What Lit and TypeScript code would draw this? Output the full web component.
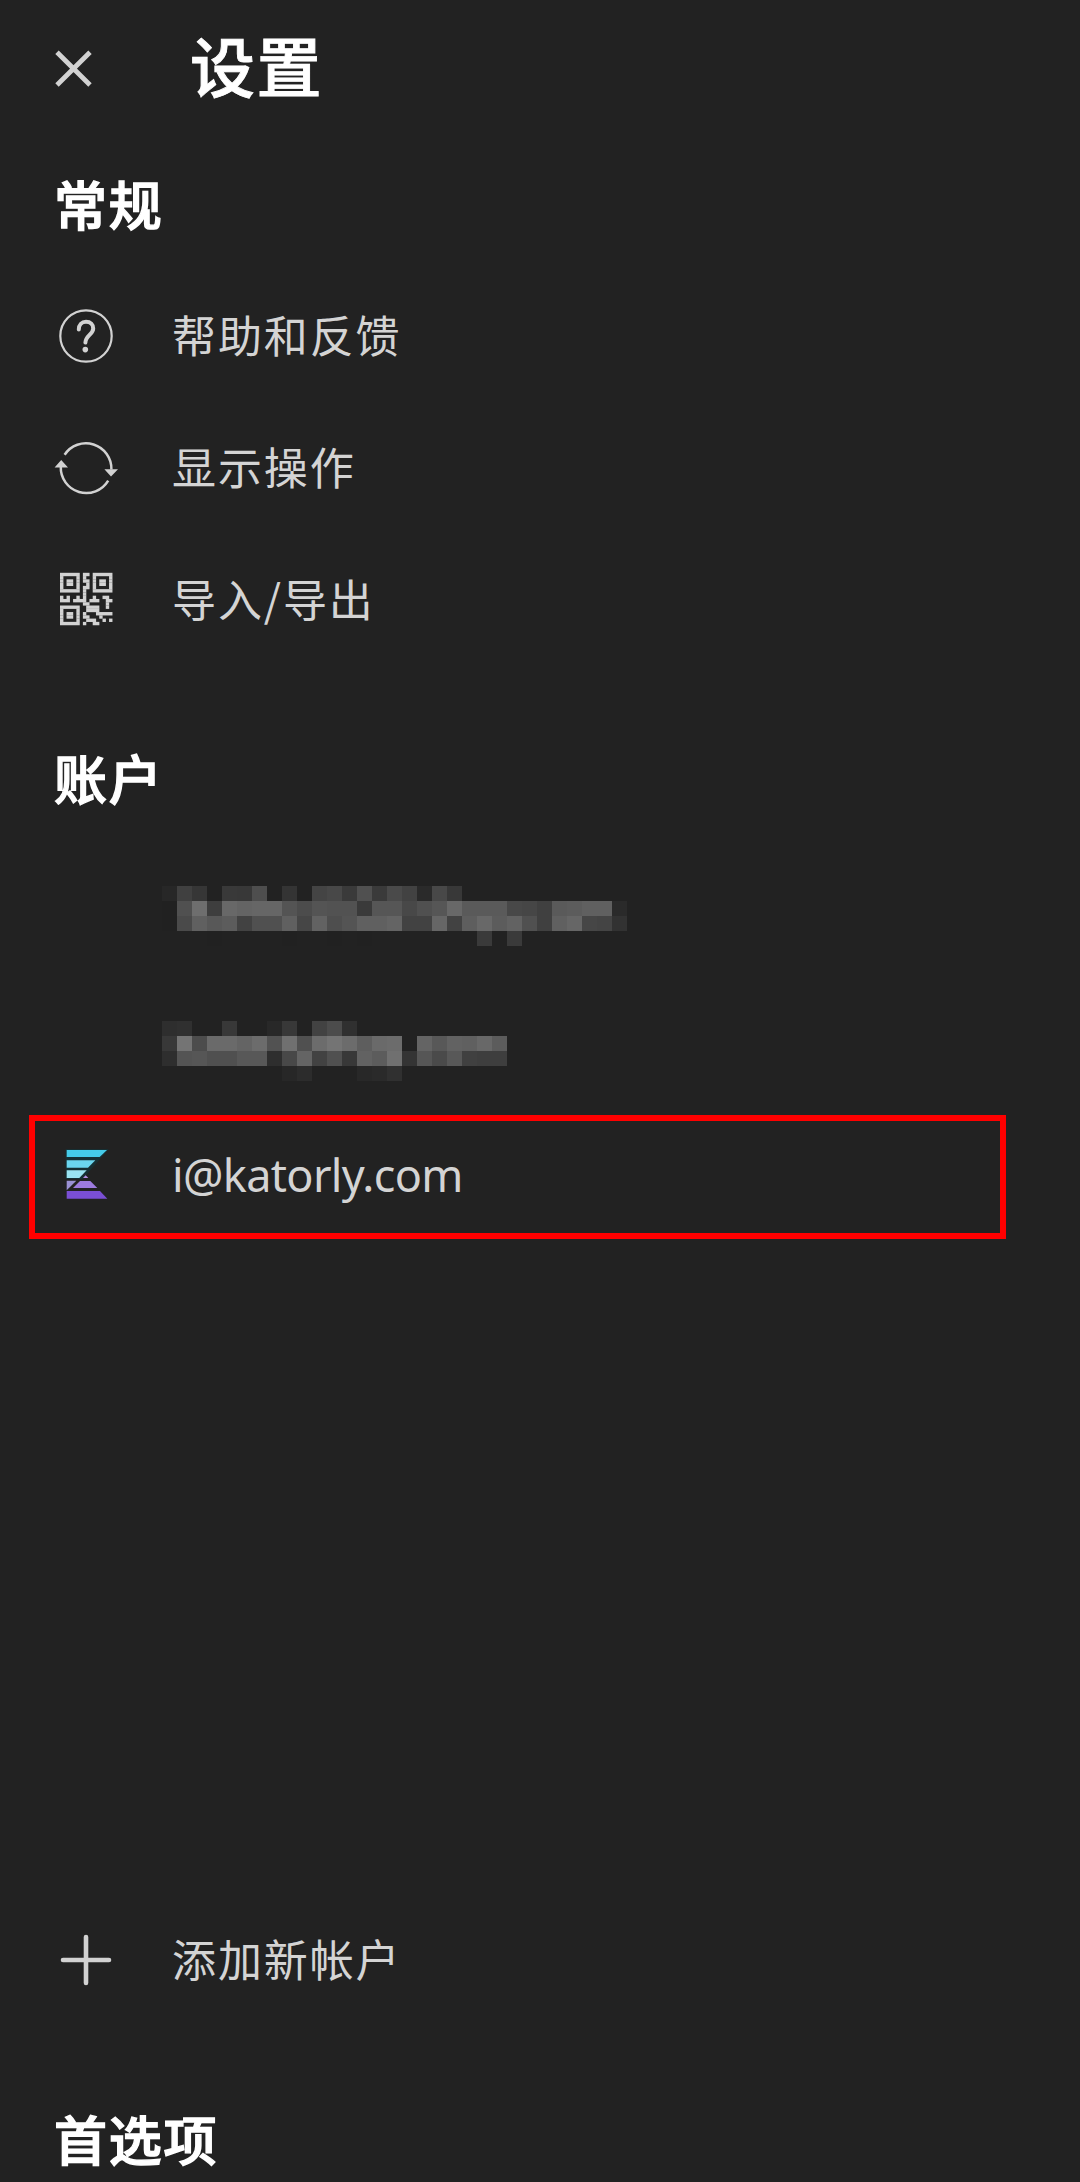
import { LitElement, html, svg, css } from "lit";
import { customElement, property } from "lit/decorators.js";

const QR = [
  "111111.11.111111",
  "1....1.1..1....1",
  "1.11.1.11.1.11.1",
  "1.11.1..1.1.11.1",
  "1....1.11.1....1",
  "111111.1..111111",
  ".......1........",
  "1.1..1.1..1..11.",
  "111.1111.111..11",
  ".......11.....1.",
  "111111..1111..1.",
  "1....1..1111....",
  "1.11.1.1...11111",
  "1.11.1.11...1...",
  "1....1..111..1.1",
  "111111.1..11....",
];

const MASK_A = [
  "27 40 36 22 39 38 4e 22 34 22 44 48 3a 50 3a 4a 42 2a 48 38",
  "21 50 6e 3e 68 64 66 66 54 4c 54 52 52 3a 56 56 48 50 56 68 5a 5a 5a 48 46 40 5a 5c 60 60 2a",
  "21 4a 60 58 5c 42 50 50 60 46 62 4e 54 60 60 64 42 42 66 42 5e 68 5c 62 50 40 60 66 46 44 32",
  "22 22 22 21 22 22 22 22 21 22 22 21 22 21 22 22 22 22 22 22 22 3a 22 3a",
];

const MASK_B = [
  "2e 30 22 22 38 22 22 28 38 22 42 4c 30",
  "38 74 4c 6a 6a 64 6c 52 70 50 6c 74 6c 5e 6a 6c 22 64 58 62 60 68 5c",
  "2e 54 56 50 50 58 58 2e 48 64 42 50 38 62 5c 70 34 56 4a 58 40 3e 3e",
  "22 22 22 22 22 22 22 22 27 2c 22 22 22 28 2a 30",
];

const icons: Record<string, unknown> = {
  help: svg`<g fill="none" stroke="#d2d2d2" stroke-linecap="round">
      <circle cx="32" cy="32" r="25.7" stroke-width="2.2"/>
      <path stroke-width="4" d="M24.8 25.6C24.8 20.6 27.8 17.8 32 17.8C36.6 17.8 39.2 20.6 39.2 24.4C39.2 30.4 31.6 31.6 31.4 38.6"/>
    </g><circle cx="31.3" cy="45.6" r="2.8" fill="#d2d2d2"/>`,
  sync: svg`<g fill="none" stroke="#d2d2d2" stroke-width="2.5">
      <path d="M10.6 18.8A25.5 25.5 0 0 1 57.4 33.5"/>
      <path d="M54.2 44.6A25.5 25.5 0 0 1 6.8 30.5"/>
    </g><path fill="#d2d2d2" d="M0.6 31.4L7.2 24L14 31.4ZM50.4 33.2L57 40.4L64 33.2Z"/>`,
  qr: svg`<g fill="#d2d2d2" transform="translate(6 4.8) scale(3.27)">
      ${QR.flatMap((line, y) => [...line.matchAll(/1+/g)].map((m) =>
        svg`<rect x=${m.index} y=${y} width=${m[0].length + 0.04} height="1.04"/>`))}
    </g>`,
  plus: svg`<path fill="none" stroke="#d2d2d2" stroke-width="4.6" stroke-linecap="round" d="M32 9V55M9 32H55"/>`,
  brand: svg`<g transform="translate(-4 -14) scale(.33333)">
      <path fill="#0d3a42" d="M47 57H176L98 147H47Z" opacity=".55"/>
      <path fill="#45cbe9" d="M50 60H171L149 81H50Z"/>
      <path fill="#6bd6ef" d="M50 91H136L114 113H50Z"/>
      <path fill="#9ae4f2" d="M50 121H110L88 144H50Z"/>
      <path fill="#9a91d4" d="M50 152H79L50 181Z"/>
      <path fill="#b48fe3" d="M99 144L107 136L115 144Z"/>
      <path fill="#9d7bdf" d="M90 153H121L142 174H69Z"/>
      <path fill="#7a4fd4" d="M50 183H150L172 206H50Z"/>
    </g>`,
};

@customElement("settings-row")
class SettingsRow extends LitElement {
  @property() icon = "";
  @property() label = "";
  @property({ type: Boolean }) marked = false;

  static styles = css`
    :host { display: flex; position: relative; align-items: center; gap: 54px; height: 132px; padding-left: 54px; }
    .icon { width: 64px; height: 64px; flex: none; overflow: visible; }
    .label { padding-bottom: 4px; font-size: 44px; letter-spacing: 1.9px; line-height: 64px; color: #d4d4d4; white-space: nowrap; }
    .latin { padding-bottom: 2px; font-family: "Noto Sans", sans-serif; font-size: 45px; letter-spacing: -0.65px; }
    .mark { position: absolute; left: 29px; top: 5px; width: 977px; height: 124px; box-sizing: border-box; border: 6px solid #f00; }
  `;

  render() {
    return html`
      <svg class="icon" viewBox="0 0 64 64">${icons[this.icon]}</svg>
      <span class=${/^[\x20-\x7e]+$/.test(this.label) ? "label latin" : "label"}>${this.label}</span>
      ${this.marked ? html`<div class="mark"></div>` : ""}`;
  }
}

@customElement("masked-row")
class MaskedRow extends LitElement {
  @property({ attribute: false }) cells: string[] = [];

  static styles = css`
    :host { display: flex; box-sizing: border-box; height: 132px; padding-left: 162px; }
    .mosaic { width: 465px; height: 60px; }
    .upper { padding-top: 40px; }
    .lower { padding-top: 43px; }
  `;

  render() {
    return html`<div class=${this.cells === MASK_A ? "upper" : "lower"}>
      <svg class="mosaic" viewBox="0 0 31 4" shape-rendering="crispEdges">
        ${this.cells.flatMap((line, y) => line.split(" ").map((v, x) =>
          svg`<rect x=${x} y=${y} width="1" height="1" fill=${"#" + v + v + v}/>`))}
      </svg></div>`;
  }
}

@customElement("app-root")
class AppRoot extends LitElement {
  static styles = css`
    :host {
      display: flex; flex-direction: column; height: 2182px; overflow: hidden; background: #222;
      font-family: "Noto Sans CJK SC", sans-serif;
    }
    .bar { display: flex; flex: none; align-items: center; gap: 97px; height: 136px; padding-left: 54px; }
    .close { width: 39px; height: 39px; flex: none; }
    .title { margin: 0; padding-bottom: 8px; font-size: 65px; font-weight: 500; letter-spacing: 1.5px; line-height: 96px; color: #fff; -webkit-text-stroke: 0.9px #fff; }
    .heading { margin: 0; flex: none; height: 134px; padding-left: 54px; font-size: 53px; font-weight: 500; letter-spacing: 1.7px; line-height: 134px; color: #fff; -webkit-text-stroke: 1.4px #fff; }
    .group { display: flex; flex: none; flex-direction: column; }
    .accounts { padding-top: 46px; flex: 1; }
    .accounts .heading { line-height: 131px; }
    .add { margin-top: auto; }
    .prefs { height: 156px; padding-top: 0; justify-content: flex-end; }
    .prefs .heading { height: 110px; line-height: 132px; }
  `;

  render() {
    return html`
      <header class="bar">
        <svg class="close" viewBox="0 0 39 39"><path fill="none" stroke="#d2d2d2" stroke-width="4.8" d="M3 3.2L36 36M36 3.2L3 36"/></svg>
        <h1 class="title">设置</h1>
      </header>
      <section class="group">
        <h2 class="heading">常规</h2>
        <settings-row icon="help" label="帮助和反馈"></settings-row>
        <settings-row icon="sync" label="显示操作"></settings-row>
        <settings-row icon="qr" label="导入/导出"></settings-row>
      </section>
      <section class="group accounts">
        <h2 class="heading">账户</h2>
        <masked-row .cells=${MASK_A}></masked-row>
        <masked-row .cells=${MASK_B}></masked-row>
        <settings-row icon="brand" label="i@katorly.com" marked></settings-row>
        <settings-row class="add" icon="plus" label="添加新帐户"></settings-row>
      </section>
      <section class="group prefs">
        <h2 class="heading">首选项</h2>
      </section>`;
  }
}
